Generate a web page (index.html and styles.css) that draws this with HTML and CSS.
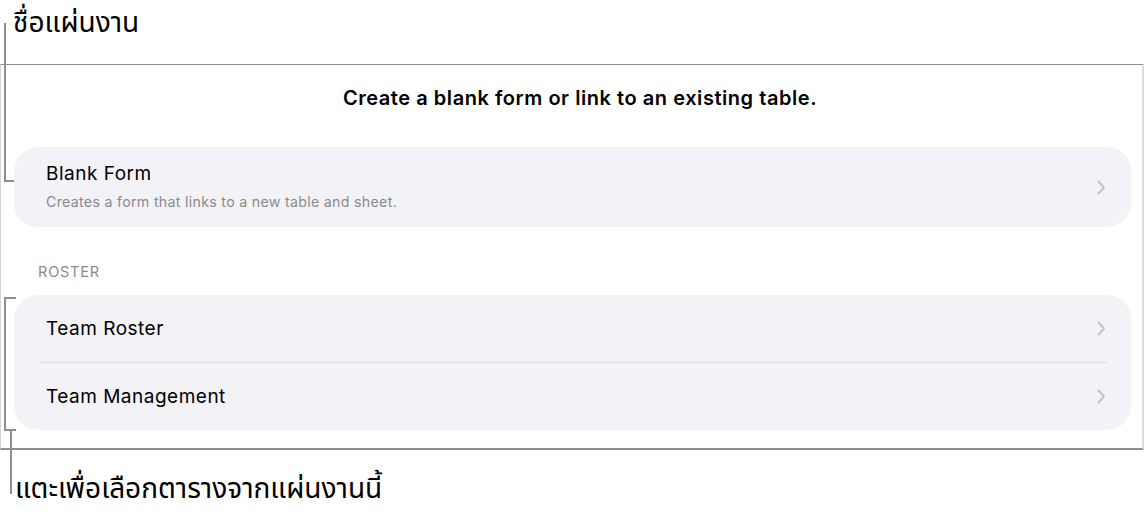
FILE: index.html
```html
<!DOCTYPE html>
<html lang="th">
<head>
<meta charset="UTF-8">
<title>New Form</title>
<link rel="stylesheet" href="styles.css">
</head>
<body>

<!-- callout: sheet name -->
<div class="callout-top">ชื่อแผ่นงาน</div>
<div class="line line-top-v"></div>
<div class="line line-top-h"></div>

<!-- form picker sheet -->
<div class="sheet">
    <div class="sheet-title">Create a blank form or link to an existing table.</div>

    <div class="group">
        <div class="row row-tall">
            <div class="row-text">
                <div class="row-name">Blank Form</div>
                <div class="row-desc">Creates a form that links to a new table and sheet.</div>
            </div>
            <svg class="chev" width="9" height="15" viewBox="0 0 9 15"><path d="M1.5 1.5 L7 7.5 L1.5 13.5" fill="none" stroke="#c4c4c7" stroke-width="2" stroke-linecap="round" stroke-linejoin="round"/></svg>
        </div>
    </div>

    <div class="group-label">ROSTER</div>

    <div class="group">
        <div class="row">
            <div class="row-name">Team Roster</div>
            <svg class="chev" width="9" height="15" viewBox="0 0 9 15"><path d="M1.5 1.5 L7 7.5 L1.5 13.5" fill="none" stroke="#c4c4c7" stroke-width="2" stroke-linecap="round" stroke-linejoin="round"/></svg>
        </div>
        <div class="sep"></div>
        <div class="row">
            <div class="row-name">Team Management</div>
            <svg class="chev" width="9" height="15" viewBox="0 0 9 15"><path d="M1.5 1.5 L7 7.5 L1.5 13.5" fill="none" stroke="#c4c4c7" stroke-width="2" stroke-linecap="round" stroke-linejoin="round"/></svg>
        </div>
    </div>
</div>

<!-- callout: tables bracket -->
<div class="line bracket"></div>
<div class="line line-bottom-v"></div>
<div class="callout-bottom">แตะเพื่อเลือกตารางจากแผ่นงานนี้</div>

</body>
</html>
```

FILE: styles.css
```css
body {
margin: 0;
background: #fff;
font-family: Inter, "Noto Sans", sans-serif;
color: #000;
position: relative;
width: 1144px;
height: 519px;
overflow: hidden;
}

.callout-top,
.callout-bottom {
font-family: "Noto Sans Thai", "Noto Sans Thai UI", Inter, sans-serif;
font-size: 28px;
}

.callout-top {
height: 64px;
padding-left: 13px;
line-height: 48px;
}

.callout-bottom {
padding: 22px 0 0 15px;
line-height: 36px;
}

.sheet {
height: 383px;
border-top: 1px solid #8e8e8e;
border-bottom: 2px solid #8e8e8e;
border-left: 1px solid #d4d4d4;
border-right: 2px solid #dcdcdc;
width: 1141px;
}

.sheet-title {
text-align: center;
font-weight: 600;
font-size: 20px;
letter-spacing: 0.55px;
padding: 21px 0 0 17px;
height: 61px;
line-height: 24px;
}

.group {
margin: 0 11px 0 13px;
background: #f2f2f7;
border-radius: 24px;
}

.row {
display: flex;
align-items: center;
justify-content: space-between;
height: 67px;
padding: 0 25px 0 32px;
}

.row-tall {
height: 80px;
}

.row-text {
padding-bottom: 2px;
}

.row-name {
font-size: 19px;
letter-spacing: 0.5px;
line-height: 24px;
}

.row-desc {
font-size: 14.2px;
letter-spacing: 0.3px;
line-height: 16px;
color: #8a8a8e;
margin-top: 8px;
}

.sep {
height: 1px;
background: #dcdce0;
margin: 0 24px 0 24px;
}

.group-label {
font-size: 14.5px;
letter-spacing: 0.8px;
color: #8a8a8e;
padding: 36px 0 0 37px;
height: 32px;
}

.line {
position: absolute;
background: #8e8e8e;
}

.line-top-v {
left: 4px;
top: 23px;
width: 2px;
height: 159px;
}

.line-top-h {
left: 4px;
top: 180px;
width: 10px;
height: 2px;
}

.bracket {
left: 4px;
top: 297px;
width: 10px;
height: 130px;
background: none;
border: 2px solid #8e8e8e;
border-right: none;
}

.line-bottom-v {
left: 10px;
top: 431px;
width: 2px;
height: 63px;
}
```
